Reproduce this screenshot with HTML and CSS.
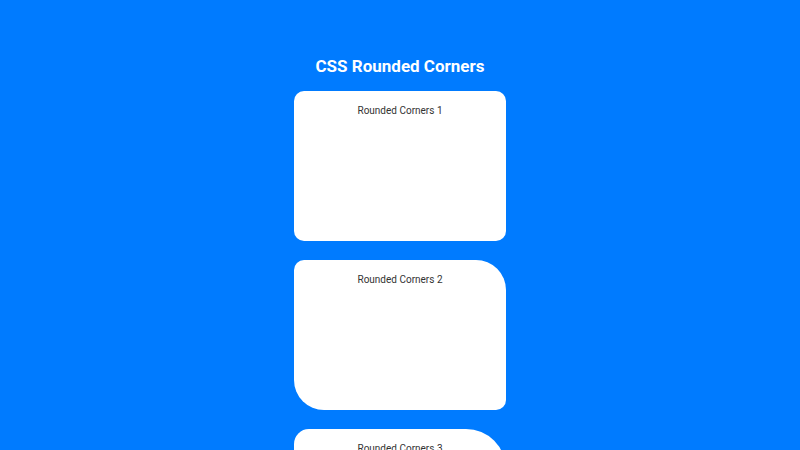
FILE: index.html
```html
<!DOCTYPE html>
<html lang="en">
	<head>
		<meta charset="UTF-8" />
		<meta name="viewport" content="width=device-width, initial-scale=1.0" />
		<title>CSS Rounded Corners</title>
		<link rel="stylesheet" href="styles.css">
	</head>
	<body>
		<header>CSS Rounded Corners</header>
		<div class="boxes">
			<div class="box box-1">Rounded Corners 1</div>
			<div class="box box-2">Rounded Corners 2</div>
			<div class="box box-3">Rounded Corners 3</div>
		</div>
	</body>
</html>
```

FILE: styles.css
```css
body {
	margin: 0;
	font-family: 'Roboto', sans-serif;
	background: #007bff;
	min-height: 100vh;
	padding-top: 56px;
}
header {
	text-align: center;
	font-size: 17px;
	line-height: 20px;
	font-weight: 700;
	color: #fff;
	margin-bottom: 15px;
}
.boxes {
	display: flex;
	flex-direction: column;
	align-items: center;
	gap: 19px;
}
.box {
	width: 212px;
	height: 150px;
	box-sizing: border-box;
	background: #fff;
	color: #333;
	font-size: 10px;
	line-height: 12px;
	text-align: center;
	padding-top: 14px;
	border-radius: 10px;
}
.box-2 {
	border-radius: 10px 30px 10px 30px;
}
.box-3 {
	border-radius: 15px 40px 15px 40px;
}
```
